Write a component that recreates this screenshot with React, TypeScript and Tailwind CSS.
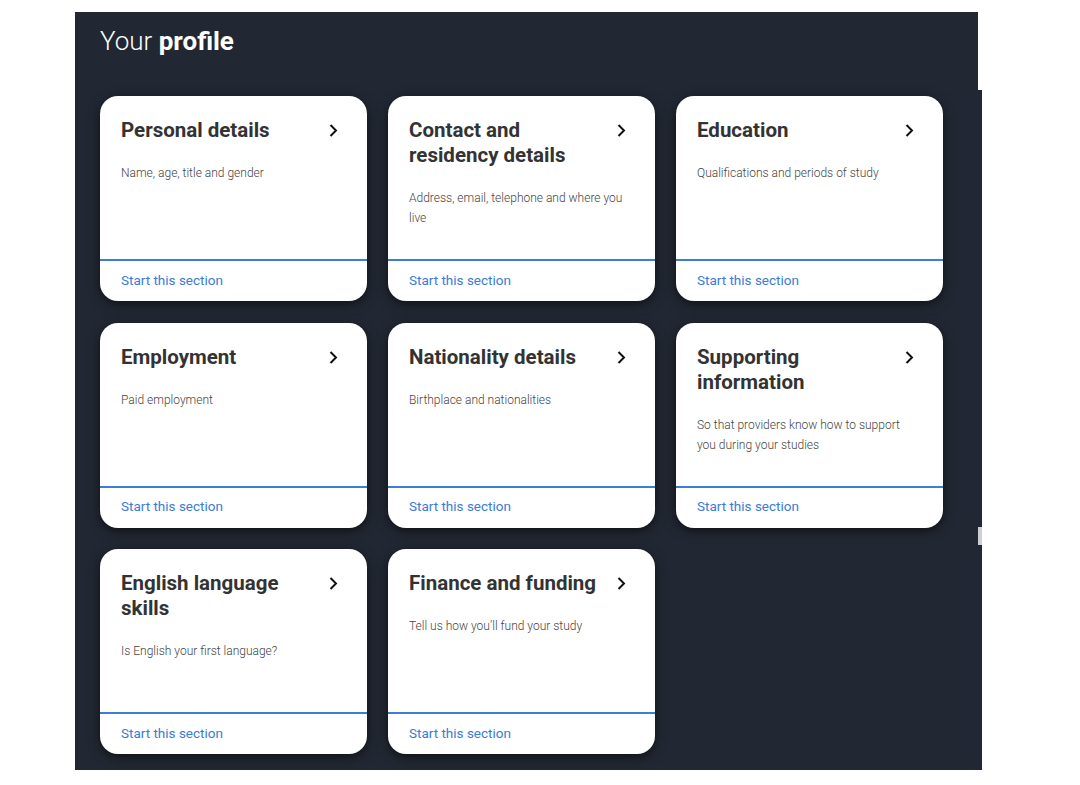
const sections = [
  { title: 'Personal details', description: 'Name, age, title and gender' },
  { title: 'Contact and residency details', description: 'Address, email, telephone and where you live' },
  { title: 'Education', description: 'Qualifications and periods of study' },
  { title: 'Employment', description: 'Paid employment' },
  { title: 'Nationality details', description: 'Birthplace and nationalities' },
  { title: 'Supporting information', description: 'So that providers know how to support you during your studies' },
  { title: 'English language skills', description: 'Is English your first language?' },
  { title: 'Finance and funding', description: 'Tell us how you\u2019ll fund your study' },
];

export default function App() {
  return (
    <div className="min-h-[785px] bg-white pt-[12px] pl-[75px]" style={{ fontFamily: 'Roboto, "Noto Sans", sans-serif' }}>
      <div className="relative h-[758px] w-[907px] bg-[#222833] pl-[25px] pt-[14px]">
        {/* page edge artifacts */}
        <div className="absolute right-0 top-0 h-[78px] w-[4px] bg-white" />
        <div className="absolute right-0 top-[515px] h-[18px] w-[4px] bg-[#cfcfd1]" />

        <h1 className="text-[26px] leading-[31px] text-white">
          <span className="font-light">Your </span>
          <span className="font-bold">profile</span>
        </h1>

        <div className="mt-[39px] grid grid-cols-[267px_267px_267px] gap-x-[21px] gap-y-[21.5px]">
          {sections.map((s) => (
            <SectionCard key={s.title} title={s.title} description={s.description} />
          ))}
        </div>
      </div>
    </div>
  );
}

function SectionCard({ title, description }: { title: string; description: string }) {
  return (
    <div className="flex h-[205px] flex-col overflow-hidden rounded-[18px] bg-white shadow-[0_3px_12px_rgba(0,0,0,0.6)]">
      <div className="flex-1 px-[21px] pt-[22px]">
        <div className="flex items-start gap-3">
          <h2 className="flex-1 text-[20.5px] font-bold leading-[25px] text-[#333333]">{title}</h2>
          <ChevronIcon className="mr-[8px] mt-[6px] h-[13px] w-[9px] shrink-0" />
        </div>
        <p className="mt-[20px] pr-[6px] text-[12px] font-light leading-[20px] text-[#444444]">{description}</p>
      </div>
      <div className="flex h-[42px] items-center border-t-2 border-[#3b7dd8] px-[21px] pb-[2px]">
        <a href="#" className="text-[13.5px] text-[#3a7bd5]">Start this section</a>
      </div>
    </div>
  );
}

function ChevronIcon({ className }: { className?: string }) {
  return (
    <svg className={className} viewBox="0 0 9 13" fill="none" stroke="#111111" strokeWidth="2">
      <path d="M1.5 1l5.5 5.5L1.5 12" />
    </svg>
  );
}
